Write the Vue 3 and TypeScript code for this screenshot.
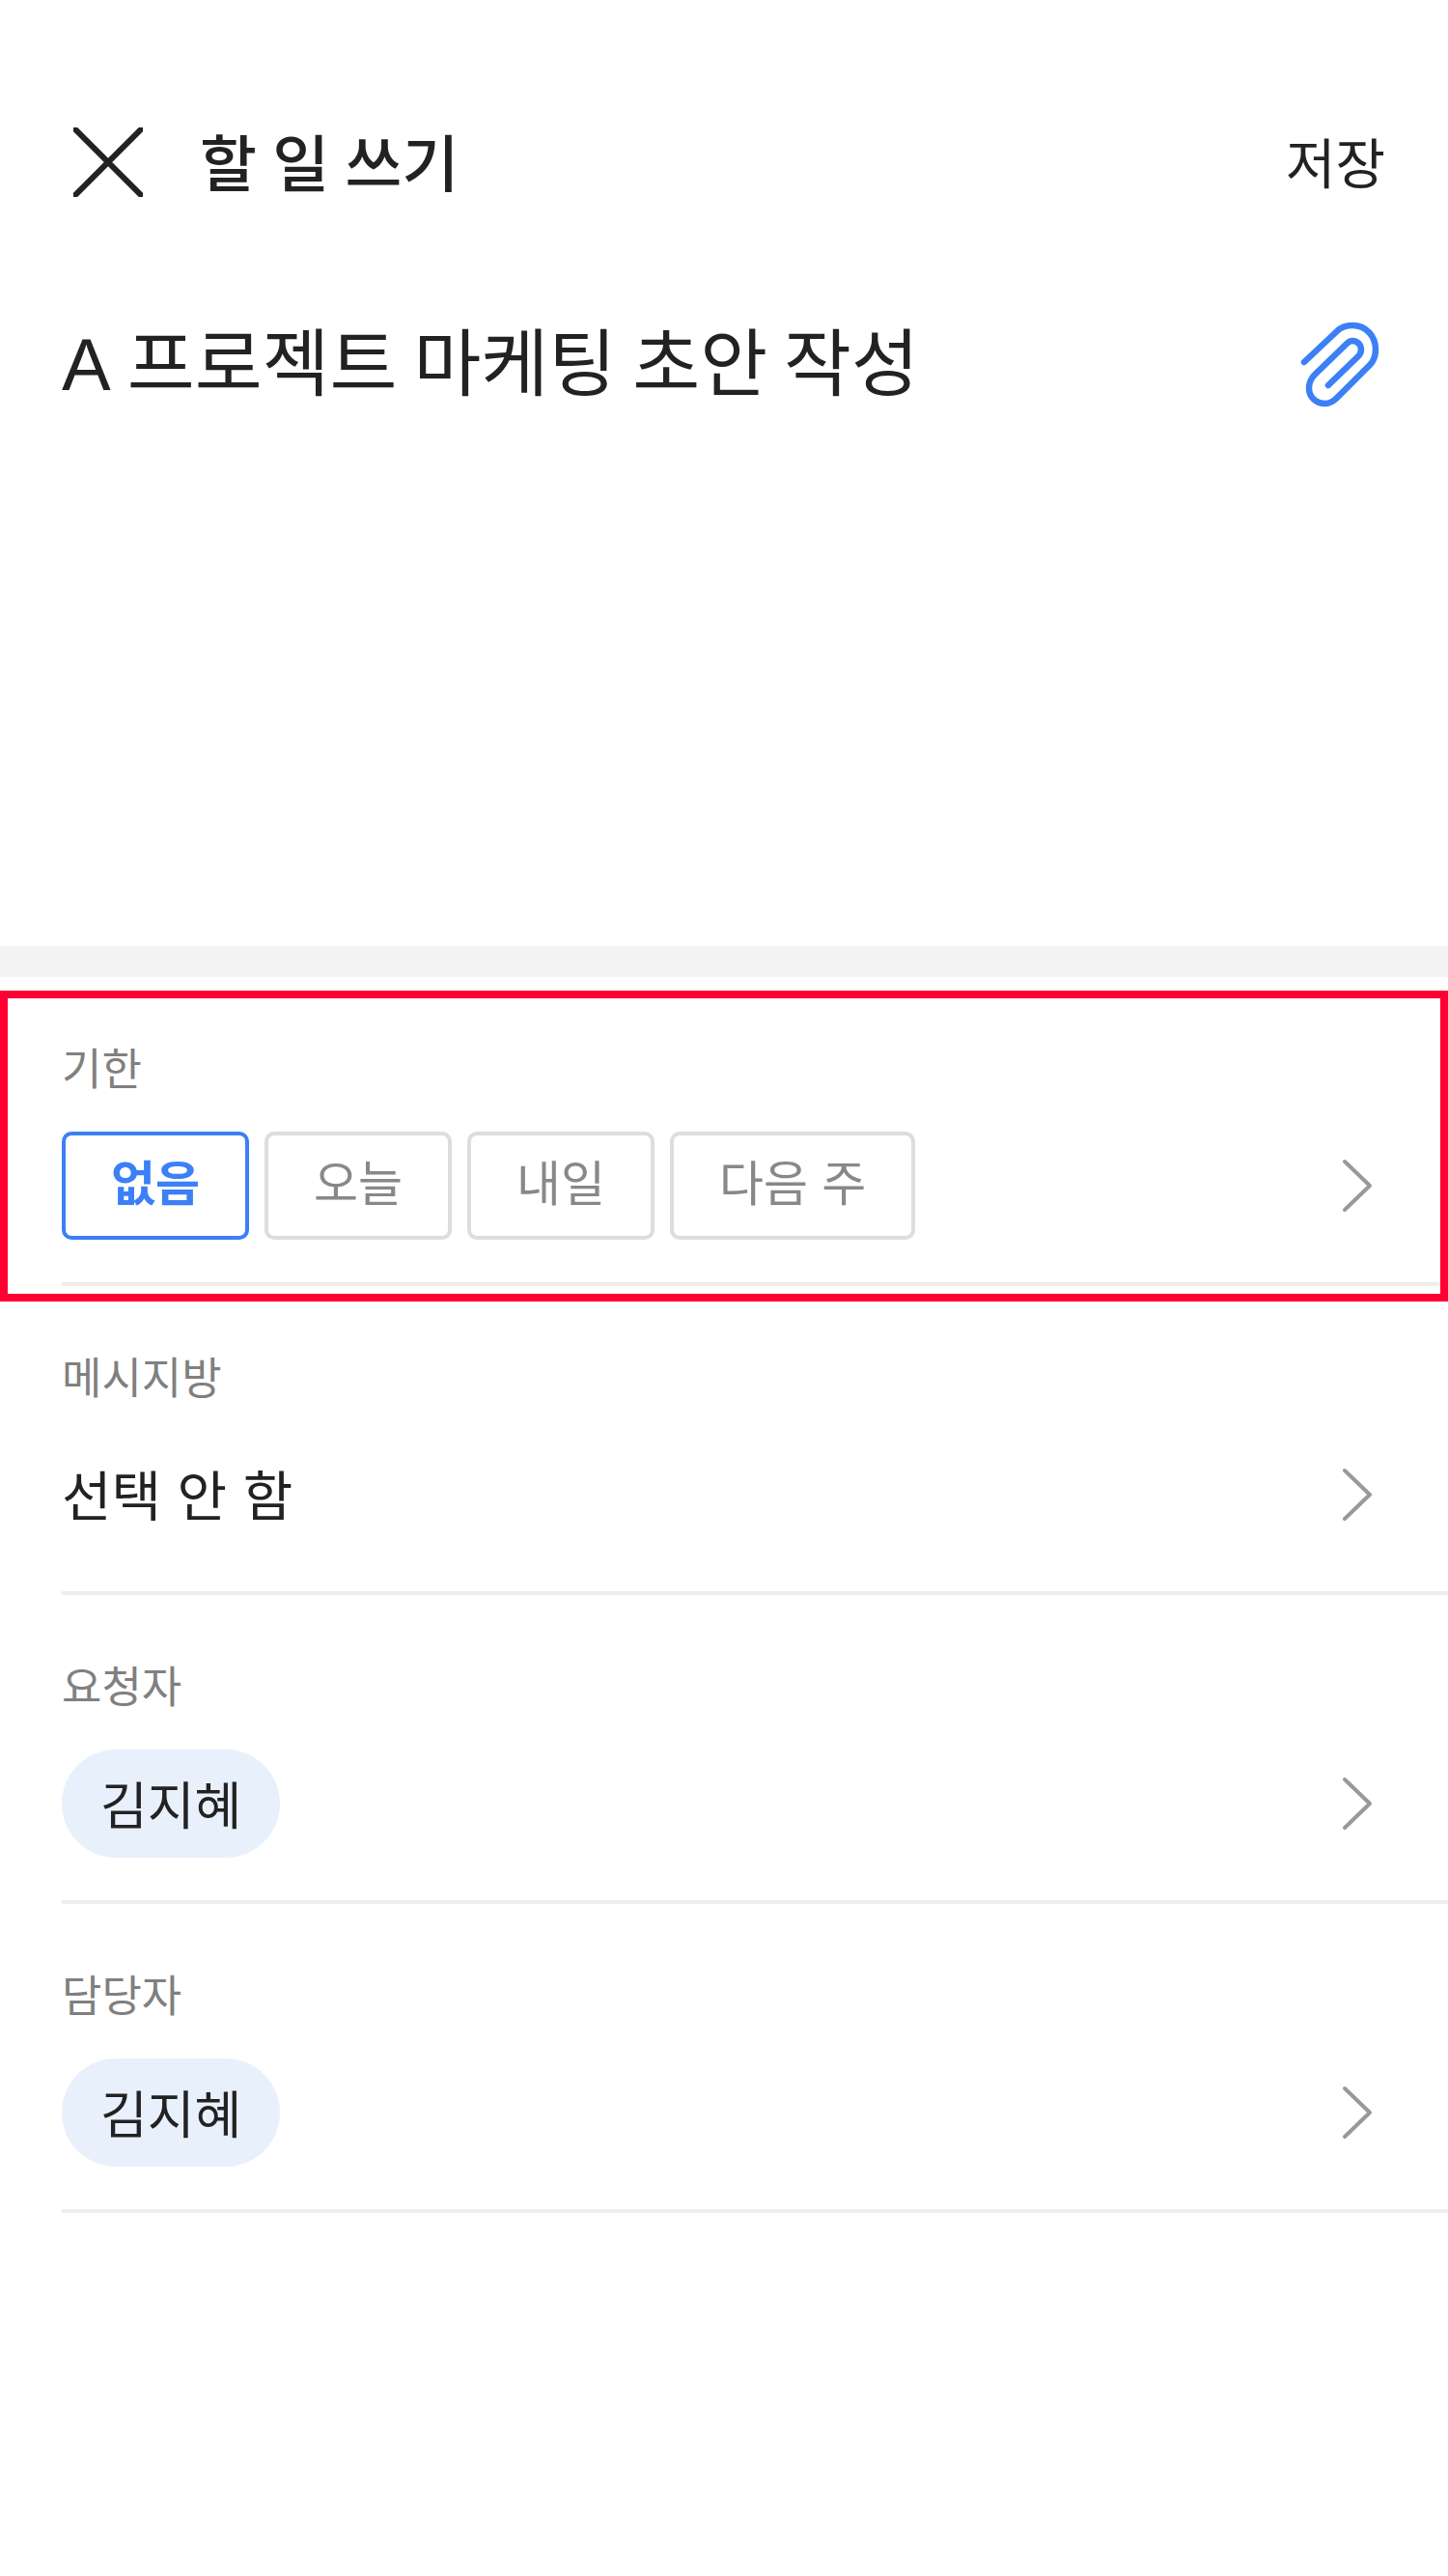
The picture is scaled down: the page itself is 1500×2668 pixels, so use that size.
<script setup lang="ts">
const dueOptions = [
  { label: '없음', active: true },
  { label: '오늘', active: false },
  { label: '내일', active: false },
  { label: '다음 주', active: false },
]
</script>

<template>
  <div class="page">
    <div class="compose">
      <header class="header">
        <svg class="close-icon" width="72" height="72" viewBox="0 0 72 72" fill="none">
          <path d="M2 2 L70 70 M70 2 L2 70" stroke="#222" stroke-width="6" stroke-linecap="round" />
        </svg>
        <h1 class="header-title">할 일 쓰기</h1>
        <span class="save">저장</span>
      </header>
      <div class="title-row">
        <span class="todo-title"><span class="latin">A</span> 프로젝트 마케팅 초안 작성</span>
        <svg class="clip-icon" width="96" height="96" viewBox="0 3 96 96" fill="none">
          <path
            d="M10 47 L44 15 C48 11 54 9 60 9 C74 9 84 20 84 34 C84 40 82 46 78 50 L44 84 C40 88 36 90 32 90 C22 90 15 83 15 74 C15 69 17 64 21 60 L54 28 C56 26 58 25 60 25 C65 25 69 29 69 34 C69 36 68 39 66 41 L35 71"
            stroke="#3b80f6"
            stroke-width="6.5"
            stroke-linecap="round"
            stroke-linejoin="round"
          />
        </svg>
      </div>
    </div>

    <div class="band"></div>

    <section class="field due">
      <div class="label">기한</div>
      <div class="row">
        <div class="options">
          <button
            v-for="opt in dueOptions"
            :key="opt.label"
            class="option"
            :class="{ active: opt.active }"
          >
            {{ opt.label }}
          </button>
        </div>
        <svg class="chevron" width="32" height="56" viewBox="0 0 32 56" fill="none">
          <path d="M3 3 L29 28 L3 53" stroke="#999" stroke-width="4" stroke-linecap="round" stroke-linejoin="round" />
        </svg>
      </div>
      <div class="highlight"></div>
    </section>

    <section class="field">
      <div class="label">메시지방</div>
      <div class="row">
        <span class="value">선택 안 함</span>
        <svg class="chevron" width="32" height="56" viewBox="0 0 32 56" fill="none">
          <path d="M3 3 L29 28 L3 53" stroke="#999" stroke-width="4" stroke-linecap="round" stroke-linejoin="round" />
        </svg>
      </div>
    </section>

    <section class="field">
      <div class="label">요청자</div>
      <div class="row">
        <span class="pill">김지혜</span>
        <svg class="chevron" width="32" height="56" viewBox="0 0 32 56" fill="none">
          <path d="M3 3 L29 28 L3 53" stroke="#999" stroke-width="4" stroke-linecap="round" stroke-linejoin="round" />
        </svg>
      </div>
    </section>

    <section class="field">
      <div class="label">담당자</div>
      <div class="row">
        <span class="pill">김지혜</span>
        <svg class="chevron" width="32" height="56" viewBox="0 0 32 56" fill="none">
          <path d="M3 3 L29 28 L3 53" stroke="#999" stroke-width="4" stroke-linecap="round" stroke-linejoin="round" />
        </svg>
      </div>
    </section>
  </div>
</template>

<style scoped>
.page {
  width: 1500px;
  height: 2668px;
  background: #fff;
  color: #222;
  font-family: 'Noto Sans CJK KR', 'Noto Sans', sans-serif;
  overflow: hidden;
}

.compose {
  height: 980px;
}

.header {
  display: flex;
  align-items: center;
  height: 72px;
  padding: 132px 65px 0 76px;
}

.close-icon {
  flex: none;
}

.header-title {
  margin: 0 0 0 59px;
  padding-bottom: 6px;
  flex: 1;
  font-size: 64px;
  font-weight: 500;
  line-height: 66px;
  word-spacing: 2px;
}

.save {
  padding-bottom: 4px;
  font-size: 56px;
  line-height: 68px;
}

.title-row {
  display: flex;
  align-items: center;
  justify-content: space-between;
  padding: 123px 64px 0 64px;
}

.todo-title {
  padding-bottom: 8px;
  font-size: 76px;
  line-height: 88px;
}

.latin {
  font-family: 'Liberation Sans', sans-serif;
}

.clip-icon {
  flex: none;
  margin-right: -1px;
}

.band {
  height: 32px;
  background: #f4f4f4;
}

.field {
  position: relative;
  height: 320px;
  box-sizing: border-box;
  margin-left: 64px;
  padding-top: 64px;
  border-bottom: 4px solid #eee;
}

.label {
  padding-bottom: 3px;
  font-size: 45px;
  line-height: 57px;
  color: #808080;
}

.row {
  display: flex;
  align-items: center;
  justify-content: space-between;
  height: 112px;
  margin-top: 36px;
  padding-right: 78px;
}

.options {
  display: flex;
  gap: 16px;
}

.option {
  box-sizing: border-box;
  height: 112px;
  padding: 0 47px 12px;
  border: 4px solid #ddd;
  border-radius: 10px;
  background: #fff;
  color: #888;
  font-family: inherit;
  font-size: 50px;
  word-spacing: 3px;
}

.option.active {
  border-color: #3b80f6;
  color: #3b80f6;
  font-weight: 700;
}

.value {
  padding-bottom: 5px;
  font-size: 56px;
  line-height: 66px;
  word-spacing: 4px;
}

.pill {
  display: flex;
  align-items: center;
  box-sizing: border-box;
  height: 112px;
  padding: 0 40px 3px;
  border-radius: 56px;
  background: #e8f0fc;
  font-size: 53px;
}

.chevron {
  flex: none;
}

.highlight {
  position: absolute;
  top: 14px;
  left: -64px;
  right: 0;
  bottom: -20px;
  border: 8px solid #ff0033;
  pointer-events: none;
}
</style>

<style>
html,
body {
  background: #fff;
}
</style>
